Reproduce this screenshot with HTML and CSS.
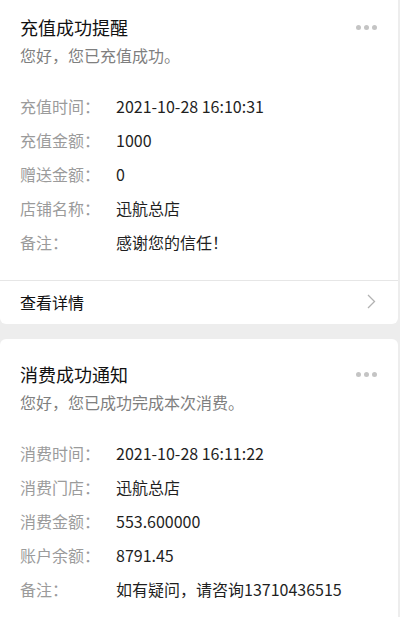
FILE: index.html
```html
<!doctype html>
<html lang="zh-CN">
  <head>
    <meta charset="utf-8">
    <meta name="viewport" content="width=device-width, initial-scale=1">
    <title>消息通知</title>
    <link rel="stylesheet" href="styles.css">
  </head>
  <body>
    <div class="msg-list">
      <!-- 充值 -->
      <div class="msg-card">
        <div class="msg-head">
          <h2 class="msg-title">充值成功提醒</h2>
          <span class="msg-more"><i></i><i></i><i></i></span>
        </div>
        <p class="msg-sub">您好，您已充值成功。</p>
        <div class="msg-rows">
          <div class="msg-row"><span class="label">充值时间：</span><span class="value">2021-10-28 16:10:31</span></div>
          <div class="msg-row"><span class="label">充值金额：</span><span class="value">1000</span></div>
          <div class="msg-row"><span class="label">赠送金额：</span><span class="value">0</span></div>
          <div class="msg-row"><span class="label">店铺名称：</span><span class="value">迅航总店</span></div>
          <div class="msg-row"><span class="label">备注：</span><span class="value">感谢您的信任！</span></div>
        </div>
        <div class="msg-foot">
          <span>查看详情</span>
          <svg class="arrow" width="9" height="15" viewBox="0 0 9 15">
            <path d="M1 1 L7.5 7.5 L1 14" fill="none" stroke="#b2b2b2" stroke-width="1.3"/>
          </svg>
        </div>
      </div>

      <!-- 消费 -->
      <div class="msg-card">
        <div class="msg-head">
          <h2 class="msg-title">消费成功通知</h2>
          <span class="msg-more"><i></i><i></i><i></i></span>
        </div>
        <p class="msg-sub">您好，您已成功完成本次消费。</p>
        <div class="msg-rows">
          <div class="msg-row"><span class="label">消费时间：</span><span class="value">2021-10-28 16:11:22</span></div>
          <div class="msg-row"><span class="label">消费门店：</span><span class="value">迅航总店</span></div>
          <div class="msg-row"><span class="label">消费金额：</span><span class="value">553.600000</span></div>
          <div class="msg-row"><span class="label">账户余额：</span><span class="value">8791.45</span></div>
          <div class="msg-row"><span class="label">备注：</span><span class="value">如有疑问，请咨询13710436515</span></div>
        </div>
      </div>
    </div>
  </body>
</html>
```

FILE: styles.css
```css
/* Reset */
* {
  margin: 0;
  padding: 0;
  box-sizing: border-box;
}

body {
  background-color: #ededed;
  font-family: "Noto Sans CJK SC", "Noto Sans", sans-serif;
  color: #1a1a1a;
  overflow: hidden;
}

/* list of message cards */
.msg-list {
  display: flex;
  flex-direction: column;
  gap: 15px;
  margin-top: -8px;
  padding-right: 2px;
}

.msg-card {
  background-color: #fff;
  border-radius: 6px;
}

/* card header */
.msg-head {
  display: flex;
  align-items: center;
  justify-content: space-between;
  padding: 24px 20px 0 20px;
}

.msg-title {
  font-size: 18px;
  font-weight: normal;
  line-height: 22px;
  color: #111;
}

.msg-more {
  display: flex;
  gap: 3px;
  padding-right: 1px;
}

.msg-more i {
  display: block;
  width: 5px;
  height: 5px;
  border-radius: 50%;
  background-color: #c4c4c4;
}

.msg-sub {
  margin-top: 6px;
  padding: 0 20px;
  font-size: 16px;
  line-height: 22px;
  color: #7f7f7f;
}

/* detail rows */
.msg-rows {
  padding: 23px 20px 21px 20px;
}

.msg-row {
  display: flex;
  height: 34px;
  align-items: center;
  font-size: 16px;
}

.msg-row .label {
  width: 96px;
  flex-shrink: 0;
  color: #9b9b9b;
}

.msg-row .value {
  color: #1f1f1f;
}

/* footer link */
.msg-foot {
  display: flex;
  align-items: center;
  justify-content: space-between;
  height: 44px;
  padding: 0 22px 2px 20px;
  border-top: 1px solid #e6e6e6;
  font-size: 16px;
  color: #111;
}
```
